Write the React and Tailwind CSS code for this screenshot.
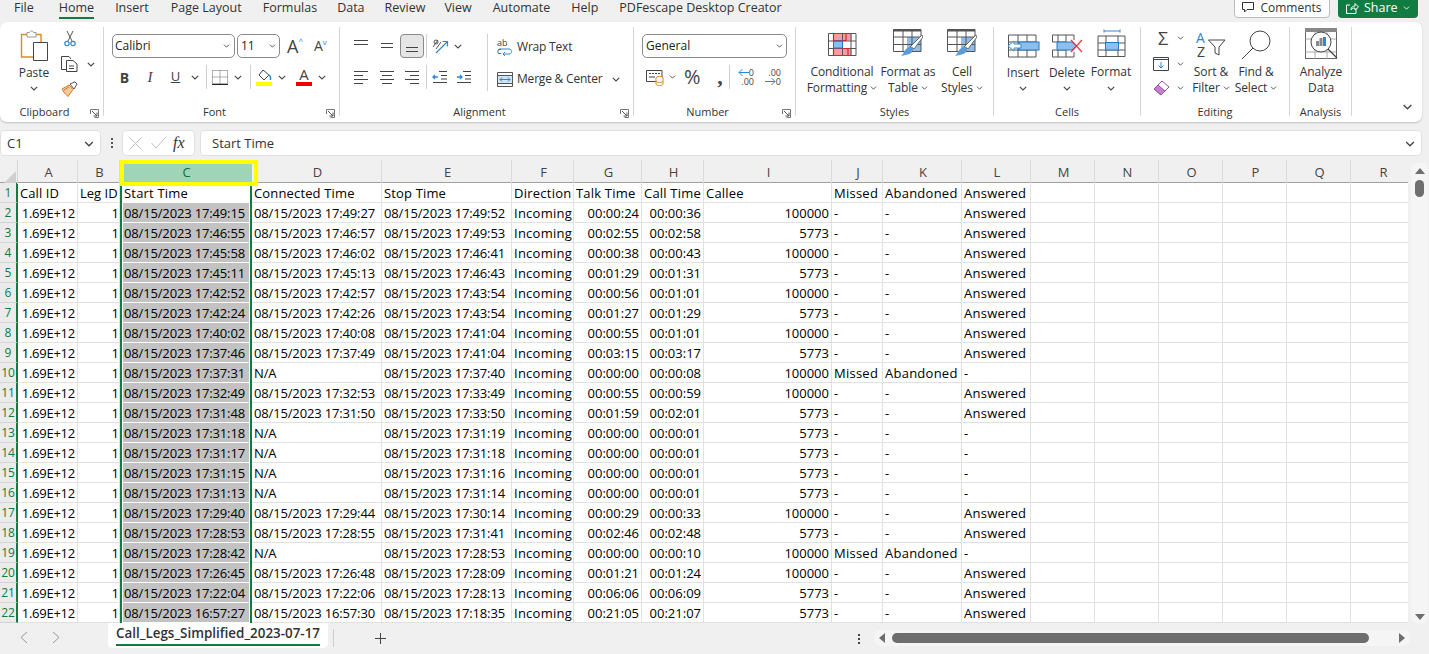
import React from "react";

const Chev = ({ w = 8, h = 5, c = "#444" }) => (
  <svg width={w} height={h} viewBox="0 0 8 5" className="shrink-0">
    <polyline points="0.8,0.8 4,4 7.2,0.8" fill="none" stroke={c} strokeWidth="1.1" />
  </svg>
);

const Launcher = () => (
  <svg width="9" height="9" viewBox="0 0 9 9" className="absolute right-[4px] -bottom-[2px]">
    <path d="M.5 5V.5H8.5V8.5H4.5" fill="none" stroke="#777" />
    <path d="M2 2L7 7M7 3.5V7H3.5" fill="none" stroke="#555" />
  </svg>
);

const Group = ({ label, w, launcher, children }) => (
  <div className={`relative flex h-[89px] shrink-0 flex-col border-r border-[#d5d5d5] ${w}`}>
    <div className="flex-1">{children}</div>
    <div
      className={`-mb-[4px] h-[15px] text-center text-[11px] leading-[14px] text-[#333] ${
        launcher ? "pr-[14px]" : ""
      }`}
    >
      {label}
    </div>
    {launcher && <Launcher />}
  </div>
);

const Slot = ({ w, children }) => (
  <div className={`flex h-6 shrink-0 items-center justify-center ${w}`}>{children}</div>
);

const Sep = () => <div className="mx-[2px] h-6 w-px shrink-0 bg-[#d0d0d0]" />;

const AlignIcon = ({ lines, y = 0 }) => (
  <svg width="16" height="14" viewBox="0 0 16 14" stroke="#444" strokeWidth="1">
    {lines.map((l, i) => (
      <line key={i} x1={l[0]} x2={l[1]} y1={l[2] + y + 0.5} y2={l[2] + y + 0.5} />
    ))}
  </svg>
);

const PasteIcon = () => (
  <svg width="30" height="32" viewBox="0 0 30 32" fill="none">
    <path d="M2.5 4.5H22V27H2.5Z" fill="#fff" stroke="#e08a1e" strokeWidth="1.4" />
    <path d="M8 5V2.5H10.5C11 .5 14 .5 14.5 2.5H17V7H8Z" fill="#fff" stroke="#999" />
    <path d="M14.5 12.5H28.5V30.5H14.5Z" fill="#fff" stroke="#444" />
  </svg>
);

const Scissors = () => (
  <svg width="12" height="17" viewBox="0 0 12 17" fill="none">
    <path d="M3 1L8 11M9 1L4 11" stroke="#555" />
    <circle cx="3" cy="13.5" r="2.2" stroke="#2b88d8" strokeWidth="1.2" />
    <circle cx="9" cy="13.5" r="2.2" stroke="#2b88d8" strokeWidth="1.2" />
  </svg>
);

const CopyIcon = () => (
  <svg width="17" height="16" viewBox="0 0 17 16" fill="none" stroke="#444">
    <path d="M5 13.5H.5V.5H8L10 3" />
    <path d="M5.5 4.5H12L16 8V15.5H5.5Z" fill="#fff" />
    <path d="M8 10H13M8 12.5H13" />
  </svg>
);

const Brush = () => (
  <svg width="17" height="16" viewBox="0 0 17 16" fill="none">
    <path d="M9 3L14 0.8L16 3L13 8L9 3Z" fill="#fff" stroke="#555" />
    <path d="M1 8L8 4L12 8.5L7 15.5L3.5 12L1 8Z" fill="#f3c9a0" stroke="#d87a16" />
    <path d="M3 9L8 6" stroke="#d87a16" />
  </svg>
);

const BorderIcon = () => (
  <svg width="16" height="15" viewBox="0 0 16 15" fill="none" stroke="#666" strokeDasharray="1 1">
    <path d="M.5.5H15.5V13.5H.5ZM8 .5V13.5M.5 7H15.5" />
    <path d="M0 14.5H16" stroke="#222" strokeDasharray="none" />
  </svg>
);

const FillIcon = () => (
  <svg width="16" height="17" viewBox="0 0 16 17" fill="none">
    <path d="M7 1L13 6L8 11L3 6Z" stroke="#444" />
    <path d="M12 6C14 6 15 8 14.5 11" stroke="#2b88d8" strokeWidth="1.5" />
    <rect y="13" width="16" height="4" fill="#ffff00" />
  </svg>
);

const OrientIcon = () => (
  <svg width="18" height="17" viewBox="0 0 18 17" fill="none">
    <path d="M2 9L7 2M5 11L10 4" stroke="#555" />
    <circle cx="5" cy="4" r="2" stroke="#555" />
    <path d="M5 15L16 4M11.5 3.5H16.5V8.5" stroke="#2b88d8" strokeWidth="1.2" />
  </svg>
);

const IndentIcon = ({ flip }) => (
  <svg width="16" height="14" viewBox="0 0 16 14" fill="none">
    <path d="M7 1.5H15M9 5.5H15M9 9H15M1 12.5H15" stroke="#444" />
    {flip ? (
      <path d="M1 7H6M4 5L6 7L4 9" stroke="#2b88d8" strokeWidth="1.3" />
    ) : (
      <path d="M1 7H6M3 5L1 7L3 9" stroke="#2b88d8" strokeWidth="1.3" />
    )}
  </svg>
);

const WrapIcon = () => (
  <svg width="15" height="8" viewBox="0 0 15 8" fill="none" className="absolute bottom-0 right-0">
    <path d="M1 1H11C14.500 1 14.500 6 11 6H5M7 4L5 6L7 8" stroke="#2b88d8" />
  </svg>
);

const MergeIcon = () => (
  <svg width="16" height="15" viewBox="0 0 16 15" fill="none">
    <path d="M.5.5H15.5V14.5H.5Z" stroke="#555" />
    <path d="M.5 3.5H15.5M.5 11.5H15.5" stroke="#555" />
    <rect x="1" y="4" width="14" height="7" fill="#cfe4f7" />
    <path d="M3 7.5H13M5 5.5L3 7.5L5 9.5M11 5.5L13 7.5L11 9.5" stroke="#2b88d8" />
  </svg>
);

const AccountingIcon = () => (
  <svg width="18" height="17" viewBox="0 0 18 17" fill="none">
    <path d="M.5 1.5H16V12.5H.5Z" stroke="#444" />
    <path d="M3 4.5H14" stroke="#444" strokeDasharray="2 1" />
    <path d="M3 8H9" stroke="#444" />
    <ellipse cx="13.5" cy="9" rx="3.5" ry="1.6" fill="#fff" stroke="#e08a1e" />
    <path d="M10 9V15C10 17 17 17 17 15V9" fill="#fff" stroke="#e08a1e" />
    <path d="M10 12C10 14 17 14 17 12" stroke="#e08a1e" />
  </svg>
);

const DecArrow = ({ right }) => (
  <svg width="11" height="9" viewBox="0 0 11 9" fill="none" stroke="#2b88d8" className="shrink-0">
    {right ? <path d="M0 4.500H10M6.500 1L10 4.500L6.500 8" /> : <path d="M11 4.500H1M4.500 1L1 4.500L4.500 8" />}
  </svg>
);

const CondIcon = () => (
  <svg width="29" height="24" viewBox="0 0 29 24" fill="none">
    <rect x="5.5" y=".5" width="18" height="7" fill="#f79ca3" />
    <rect x="5.5" y="15.5" width="18" height="7" fill="#f79ca3" />
    <rect x="5.5" y="8" width="9" height="7" fill="#8cbfee" />
    <path d="M.5.5H28V22.5H.5ZM.5 8H28M.5 15.5H28M5.5.5V22.5M14.5.5V22.5M23 .5V22.5" stroke="#555" />
    <path d="M5.5.5H18V7.5H5.5ZM5.5 15.5H20V22.5H5.5Z" stroke="#d8232a" strokeWidth="1.2" />
    <path d="M5.5 8H14.5V15H5.5Z" stroke="#1e78c8" />
  </svg>
);

const TableIcon = () => (
  <svg width="30" height="28" viewBox="0 0 30 28" fill="none">
    <rect x="14" y="8" width="14" height="14" fill="#8cbfee" />
    <path d="M.5.5H28V22.5H.5ZM.5 8H28M.5 15.5H28M10 .5V22.5M19 .5V22.5" stroke="#555" />
    <path d="M.5 1.5H28" stroke="#555" strokeWidth="2" />
    <path d="M29 6L17 18C19 18 20 19 21 20L30 8Z" fill="#fff" stroke="#666" />
    <path d="M16 18C19 18 21 20 19 23C17 26 11 26 8 27C11 25 11 20 16 18Z" fill="#5a9bdc" />
  </svg>
);

const InsertIcon = () => (
  <svg width="33" height="24" viewBox="0 0 33 24" fill="none">
    <path d="M1.5 1H29V23H1.5ZM11 1V23M20 1V23" stroke="#555" />
    <path d="M1.5 8H29M1.5 16H29" stroke="#555" />
    <rect x="12" y="8" width="20" height="8" fill="#8cbfee" stroke="#1e78c8" />
    <path d="M14 10V14H7V17L1 12L7 7V10Z" fill="#fff" stroke="#2b88d8" />
  </svg>
);

const DeleteIcon = () => (
  <svg width="31" height="24" viewBox="0 0 31 24" fill="none">
    <path d="M.5 1H22M.5 23H22M.5 1V8M.5 16V23M6 1V23M14 1V23M22 1V6M22 18V23" stroke="#555" />
    <path d="M.5 8H14M.5 16H14" stroke="#555" />
    <path d="M5 8H20L24 12L20 16H5Z" fill="#8cbfee" stroke="#1e78c8" />
    <path d="M19 6L30 18M30 6L19 18" stroke="#e8383d" strokeWidth="1.2" />
  </svg>
);

const FormatIcon = () => (
  <svg width="29" height="29" viewBox="0 0 29 29" fill="none">
    <path d="M7 2H23M7 .5V3.5M23 .5V3.5" stroke="#2b88d8" />
    <path d="M1 7H28V27.5H1ZM1 14H28M1 21H28M9 7V27.5M21 7V27.5" stroke="#555" />
    <rect x="8.5" y="13.5" width="13" height="7.5" fill="#8cbfee" stroke="#1e78c8" />
  </svg>
);

const SortIcon = () => (
  <div className="relative h-[28px] w-[30px]">
    <span className="absolute -top-[3px] left-0 text-[14px] leading-[18px] text-[#2b88d8]">A</span>
    <span className="absolute top-[11px] left-px text-[14px] leading-[18px] text-[#444]">Z</span>
    <svg width="30" height="28" viewBox="0 0 30 28" fill="none" className="absolute left-0 top-0">
      <path d="M12.5 8H29L23 15V23L19 21V15Z" fill="#fff" stroke="#444" />
    </svg>
  </div>
);

const FindIcon = () => (
  <svg width="30" height="30" viewBox="0 0 30 30" fill="none" stroke="#444">
    <circle cx="19" cy="11" r="10" fill="#fff" />
    <path d="M12 18L1 29" />
  </svg>
);

const AnalyzeIcon = () => (
  <svg width="33" height="32" viewBox="0 0 33 32" fill="none">
    <rect x=".5" y=".5" width="31" height="30" fill="#fff" stroke="#666" />
    <rect x="0" y="0" width="32" height="4" fill="#888" />
    <path d="M.5 11H31M.5 24H31M10 4V31M22 4V31" stroke="#aaa" />
    <circle cx="16" cy="14" r="10" fill="#fff" stroke="#444" />
    <rect x="11" y="13" width="3" height="5" fill="#888" />
    <rect x="14.5" y="10" width="3" height="8" fill="#888" />
    <rect x="18" y="9" width="3" height="9" fill="#2b88d8" />
    <path d="M23 21L32 30" stroke="#444" strokeWidth="1.3" />
  </svg>
);

const BigBtn = ({ w, icon, top = "h-[37px]", gap = "mt-[4px]", lines, chev }) => (
  <div className={`flex shrink-0 flex-col items-center ${w}`}>
    <div className={`flex items-end justify-center ${top}`}>{icon}</div>
    <div className={`flex flex-col items-center text-[12px] leading-[16px] tracking-[-0.1px] text-[#333] ${gap}`}>
      {lines.map((l, i) => (
        <div key={i} className="flex items-center gap-[3px] whitespace-nowrap">
          {l}
          {chev && i === lines.length - 1 && <Chev w={7} h={4} />}
        </div>
      ))}
    </div>
  </div>
);

const TABS = [
  ["File", "ml-[14px]"],
  ["Home", "ml-[25px]"],
  ["Insert", "ml-[21px]"],
  ["Page Layout", "ml-[22px]"],
  ["Formulas", "ml-[21px]"],
  ["Data", "ml-[20px]"],
  ["Review", "ml-[20px]"],
  ["View", "ml-[19px]"],
  ["Automate", "ml-[21px]"],
  ["Help", "ml-[21px]"],
  ["PDFescape Desktop Creator", "ml-[21px]"],
];

const COLS = ["A", "B", "C", "D", "E", "F", "G", "H", "I", "J", "K", "L", "M", "N", "O", "P", "Q", "R"];

const D = "08/15/2023 ";
const RAW = [
  ["17:49:15", "17:49:27", "17:49:52", "00:00:24", "00:00:36", "100000"],
  ["17:46:55", "17:46:57", "17:49:53", "00:02:55", "00:02:58", "5773"],
  ["17:45:58", "17:46:02", "17:46:41", "00:00:38", "00:00:43", "100000"],
  ["17:45:11", "17:45:13", "17:46:43", "00:01:29", "00:01:31", "5773"],
  ["17:42:52", "17:42:57", "17:43:54", "00:00:56", "00:01:01", "100000"],
  ["17:42:24", "17:42:26", "17:43:54", "00:01:27", "00:01:29", "5773"],
  ["17:40:02", "17:40:08", "17:41:04", "00:00:55", "00:01:01", "100000"],
  ["17:37:46", "17:37:49", "17:41:04", "00:03:15", "00:03:17", "5773"],
  ["17:37:31", null, "17:37:40", "00:00:00", "00:00:08", "100000", "M"],
  ["17:32:49", "17:32:53", "17:33:49", "00:00:55", "00:00:59", "100000"],
  ["17:31:48", "17:31:50", "17:33:50", "00:01:59", "00:02:01", "5773"],
  ["17:31:18", null, "17:31:19", "00:00:00", "00:00:01", "5773", "N"],
  ["17:31:17", null, "17:31:18", "00:00:00", "00:00:01", "5773", "N"],
  ["17:31:15", null, "17:31:16", "00:00:00", "00:00:01", "5773", "N"],
  ["17:31:13", null, "17:31:14", "00:00:00", "00:00:01", "5773", "N"],
  ["17:29:40", "17:29:44", "17:30:14", "00:00:29", "00:00:33", "100000"],
  ["17:28:53", "17:28:55", "17:31:41", "00:02:46", "00:02:48", "5773"],
  ["17:28:42", null, "17:28:53", "00:00:00", "00:00:10", "100000", "M"],
  ["17:26:45", "17:26:48", "17:28:09", "00:01:21", "00:01:24", "100000"],
  ["17:22:04", "17:22:06", "17:28:13", "00:06:06", "00:06:09", "5773"],
  ["16:57:27", "16:57:30", "17:18:35", "00:21:05", "00:21:07", "5773"],
];

const Cell = ({ cls = "", children }) => (
  <div
    className={`h-5 overflow-hidden whitespace-nowrap border-b border-r border-[#e1e1e1] bg-white px-[2px] leading-[21px] ${cls}`}
  >
    {children}
  </div>
);

const RowHead = ({ n }) => (
  <div className="h-5 border-b border-[#d4d4d4] border-r-2 border-r-[#107c41] bg-[#ebebeb] text-center text-[12px] leading-[20px] text-[#107c41]">
    {n}
  </div>
);

const SelCell = ({ children, head }) => (
  <div className="h-5 border-x-2 border-[#107c41] bg-white">
    <div
      className={`mx-px h-[19px] overflow-hidden whitespace-nowrap px-px leading-[21px] ${
        head ? "bg-white tracking-[0.2px]" : "bg-[#c2c2c2] tracking-[-0.15px]"
      }`}
    >
      {children}
    </div>
  </div>
);

const Row = ({ n, cells }) => {
  const head = n === 1;
  const words = "tracking-[0.25px]";
  const stamp = head ? "tracking-[0.15px]" : "tracking-[-0.15px]";
  const right = head ? "tracking-[0.2px]" : "text-right";
  return (
    <>
      <RowHead n={n} />
      <Cell cls={head ? "tracking-[0.1px]" : "text-right tracking-[-0.25px]"}>{cells[0]}</Cell>
      <Cell cls={head ? "" : "text-right pr-0"}>{cells[1]}</Cell>
      <SelCell head={head}>{cells[2]}</SelCell>
      <Cell cls={stamp}>{cells[3]}</Cell>
      <Cell cls={stamp}>{cells[4]}</Cell>
      <Cell cls={words}>{cells[5]}</Cell>
      <Cell cls={right}>{cells[6]}</Cell>
      <Cell cls={right}>{cells[7]}</Cell>
      <Cell cls={right}>{cells[8]}</Cell>
      <Cell cls={words}>{cells[9]}</Cell>
      <Cell cls={words}>{cells[10]}</Cell>
      <Cell cls={words}>{cells[11]}</Cell>
      <Cell />
      <Cell />
      <Cell />
      <Cell />
      <Cell />
      <Cell />
    </>
  );
};

const rows = RAW.map((r) => {
  const kind = r[6];
  return [
    "1.69E+12",
    "1",
    D + r[0],
    r[1] ? D + r[1] : "N/A",
    D + r[2],
    "Incoming",
    r[3],
    r[4],
    r[5],
    kind === "M" ? "Missed" : "-",
    kind === "M" ? "Abandoned" : "-",
    kind ? "-" : "Answered",
  ];
});

export default function App() {
  return (
    <div className="relative h-[654px] w-[1429px] overflow-hidden bg-[#f0f0f0] font-['Open_Sans',sans-serif] text-black">
      {/* menu tabs */}
      <div className="relative flex h-[22px] items-start text-[12.5px] leading-[15px] text-[#333]">
        {TABS.map(([t, m]) => (
          <div key={t} className={`whitespace-nowrap ${m} relative`}>
            {t}
            {t === "Home" && <div className="mt-[2px] h-[2px] bg-[#107c41]" />}
          </div>
        ))}
        <div className="ml-auto mr-[11px] flex gap-2">
          <div className="-mt-[3px] flex h-[21px] w-[96px] items-center justify-center gap-[6px] rounded-b-[4px] border border-[#bbb] bg-white text-[12px]">
            <svg width="12" height="11" viewBox="0 0 12 11" fill="none" stroke="#333">
              <path d="M.5.5H11.5V7.5H5L2.5 10V7.5H.5Z" />
            </svg>
            Comments
          </div>
          <div className="-mt-[3px] flex h-[21px] w-[80px] items-center gap-[5px] rounded-b-[4px] bg-[#107c41] pl-[8px] text-[12.500px] text-white">
            <svg width="13" height="12" viewBox="0 0 13 12" fill="none" stroke="#fff">
              <path d="M4 3H.5V11.5H10V7M5 8C5 5 7 4 9 4V1.5L12.5 5L9 8V6C7 6 6 6.500 5 8Z" />
            </svg>
            Share
            <div className="ml-auto mr-[8px]">
              <Chev w={7} h={4} c="#fff" />
            </div>
          </div>
        </div>
      </div>

      {/* ribbon */}
      <div className="relative flex h-[100px] w-[1422px] rounded-[7px] bg-white py-[5px] shadow-[0_1px_2px_rgba(0,0,0,0.2)]">
        <Group label="Clipboard" w="w-[104px]" launcher>
          <div className="flex">
            <div className="ml-[19px] flex w-[30px] flex-col items-center">
              <div className="mt-[3px]">
                <PasteIcon />
              </div>
              <div className="mt-[3px] text-[12px] leading-[16px] text-[#333]">Paste</div>
              <div className="mt-[5px]">
                <Chev />
              </div>
            </div>
            <div className="ml-[12px] flex flex-col">
              <div className="ml-[3px] mt-[3px]">
                <Scissors />
              </div>
              <div className="mt-[9px] flex items-center">
                <CopyIcon />
                <div className="ml-[9px]">
                  <Chev />
                </div>
              </div>
              <div className="mt-[9px]">
                <Brush />
              </div>
            </div>
          </div>
        </Group>

        <Group label="Font" w="w-[236px]" launcher>
          <div className="ml-[8px] mt-[7px] flex h-6 items-center">
            <div className="flex h-6 w-[123px] items-center justify-between rounded-[5px] border border-[#8a8a8a] pl-[2px] pr-[4px] text-[12px] text-[#222]">
              Calibri
              <Chev w={7} h={4} />
            </div>
            <div className="ml-[2px] flex h-6 w-[43px] items-center justify-between rounded-[5px] border border-[#8a8a8a] pl-[3px] pr-[3px] text-[12px] text-[#222]">
              11
              <Chev w={7} h={4} />
            </div>
            <div className="ml-[7px] flex w-[17px] items-start text-[18px] leading-[20px] text-[#444]">
              A<span className="text-[8px] leading-[10px] text-[#2b88d8]">^</span>
            </div>
            <div className="ml-[10px] flex w-[16px] items-start text-[14px] leading-[18px] text-[#444]">
              A<span className="text-[8px] leading-[10px] text-[#2b88d8]">v</span>
            </div>
          </div>
          <div className="ml-[8px] mt-[7px] flex items-center">
            <Slot w="w-[25px]">
              <span className="text-[14px] font-bold text-[#444]">B</span>
            </Slot>
            <Slot w="w-[26px]">
              <span className="font-['Liberation_Serif',serif] text-[15px] italic text-[#444]">I</span>
            </Slot>
            <Slot w="w-[25px]">
              <span className="text-[13px] underline text-[#444]">U</span>
            </Slot>
            <Slot w="w-[13px]">
              <Chev />
            </Slot>
            <div className="ml-[3px]">
              <Sep />
            </div>
            <Slot w="w-[21px]">
              <BorderIcon />
            </Slot>
            <Slot w="w-[16px]">
              <Chev />
            </Slot>
            <div className="ml-[2px]">
              <Sep />
            </div>
            <Slot w="w-[21px]">
              <FillIcon />
            </Slot>
            <Slot w="w-[16px]">
              <Chev />
            </Slot>
            <div className="ml-[6px] flex w-[16px] flex-col items-center">
              <span className="text-[15px] leading-[13px] text-[#444]">A</span>
              <div className="mt-[1px] h-[4px] w-[16px] bg-[#ee0000]" />
            </div>
            <Slot w="w-[19px]">
              <Chev />
            </Slot>
          </div>
        </Group>

        <Group label="Alignment" w="w-[294px]" launcher>
          <div className="flex">
            <div className="ml-[8px] w-[139px]">
              <div className="mt-[7px] flex items-center">
                <Slot w="w-[26px]">
                  <AlignIcon lines={[[1, 15, 1], [1, 15, 5]]} />
                </Slot>
                <Slot w="w-[26px]">
                  <AlignIcon lines={[[2, 14, 4], [2, 14, 8]]} />
                </Slot>
                <div className="flex h-6 w-[24px] items-center justify-center rounded-[4px] border border-[#8a8a8a] bg-[#e6e6e6]">
                  <AlignIcon lines={[[2, 14, 8], [2, 14, 12]]} />
                </div>
                <Sep />
                <Slot w="w-[22px]">
                  <OrientIcon />
                </Slot>
                <Slot w="w-[14px]">
                  <Chev />
                </Slot>
              </div>
              <div className="mt-[7px] flex items-center">
                <Slot w="w-[26px]">
                  <AlignIcon lines={[[1, 15, 1], [1, 10, 5], [1, 15, 9], [1, 10, 13]]} />
                </Slot>
                <Slot w="w-[26px]">
                  <AlignIcon lines={[[1, 15, 1], [3, 13, 5], [1, 15, 9], [3, 13, 13]]} />
                </Slot>
                <Slot w="w-[24px]">
                  <AlignIcon lines={[[1, 15, 1], [6, 15, 5], [1, 15, 9], [6, 15, 13]]} />
                </Slot>
                <Sep />
                <Slot w="w-[22px]">
                  <IndentIcon />
                </Slot>
                <Slot w="w-[26px]">
                  <IndentIcon flip />
                </Slot>
              </div>
            </div>
            <div className="mt-[7px] h-[57px] w-px bg-[#d0d0d0]" />
            <div className="ml-[9px] text-[12px] tracking-[-0.2px] text-[#333]">
              <div className="mt-[10px] flex h-5 items-center">
                <div className="relative mr-[3px] h-[17px] w-[16px] shrink-0 text-[9px] leading-[8px] tracking-normal text-[#444]">
                  ab
                  <br />c
                  <WrapIcon />
                </div>
                <span className="ml-[1px]">Wrap Text</span>
              </div>
              <div className="mt-[12px] flex h-5 items-center">
                <MergeIcon />
                <span className="ml-[4px]">Merge &amp; Center</span>
                <div className="ml-[10px]">
                  <Chev />
                </div>
              </div>
            </div>
          </div>
        </Group>

        <Group label="Number" w="w-[162px]" launcher>
          <div className="ml-[8px] mt-[7px] flex h-6 w-[145px] items-center justify-between rounded-[5px] border border-[#8a8a8a] px-[3px] text-[12px] text-[#222]">
            General
            <Chev w={7} h={4} />
          </div>
          <div className="ml-[12px] mt-[7px] flex items-center">
            <AccountingIcon />
            <div className="ml-[5px]">
              <Chev w={7} h={4} />
            </div>
            <span className="ml-[8px] w-[23px] text-[20px] leading-6 text-[#444]">%</span>
            <span className="ml-[6px] w-[14px] text-center font-['Liberation_Serif',serif] text-[22px] font-bold leading-6 text-[#444]">,</span>
            <Sep />
            <div className="ml-[3px] flex w-[19px] flex-col items-end text-[9px] leading-[9px] text-[#444]">
              <span className="flex items-center">
                <DecArrow />0
              </span>
              <span>.00</span>
            </div>
            <div className="ml-[8px] flex w-[19px] flex-col items-end text-[9px] leading-[9px] text-[#444]">
              <span>.00</span>
              <span className="flex items-center">
                <DecArrow right />0
              </span>
            </div>
          </div>
        </Group>

        <Group label="Styles" w="w-[198px]">
          <div className="flex">
            <div className="ml-[10px]">
              <BigBtn w="w-[72px]" top="h-[30px]" gap="mt-[7px]" icon={<CondIcon />} lines={["Conditional", "Formatting"]} chev />
            </div>
            <BigBtn w="w-[60px]" top="h-[30px]" gap="mt-[7px]" icon={<TableIcon />} lines={["Format as", "Table"]} chev />
            <BigBtn w="w-[48px]" top="h-[30px]" gap="mt-[7px]" icon={<TableIcon />} lines={["Cell", "Styles"]} chev />
          </div>
        </Group>

        <Group label="Cells" w="w-[147px]">
          <div className="ml-[7px] flex">
            <div className="flex w-[44px] flex-col items-center">
              <div className="mt-[7px]">
                <InsertIcon />
              </div>
              <div className="mt-[7px] text-[12px] leading-[16px] text-[#333]">Insert</div>
              <div className="mt-[5px]">
                <Chev />
              </div>
            </div>
            <div className="flex w-[44px] flex-col items-center">
              <div className="mt-[7px]">
                <DeleteIcon />
              </div>
              <div className="mt-[7px] text-[12px] leading-[16px] text-[#333]">Delete</div>
              <div className="mt-[5px]">
                <Chev />
              </div>
            </div>
            <div className="flex w-[44px] flex-col items-center">
              <div className="mt-[2px]">
                <FormatIcon />
              </div>
              <div className="mt-[6px] text-[12px] leading-[16px] text-[#333]">Format</div>
              <div className="mt-[6px]">
                <Chev />
              </div>
            </div>
          </div>
        </Group>

        <Group label="Editing" w="w-[149px]">
          <div className="flex">
            <div className="ml-[12px] flex w-[36px] flex-col">
              <div className="mt-[3px] flex h-[16px] items-center">
                <span className="w-[20px] text-center text-[18px] leading-[16px] text-[#444]">Σ</span>
                <div className="ml-[4px]">
                  <Chev w={7} h={4} />
                </div>
              </div>
              <div className="mt-[11px] flex items-center">
                <svg width="16" height="14" viewBox="0 0 16 14" fill="none">
                  <path d="M.5.5H15.500V13.500H.5Z" stroke="#444" />
                  <path d="M.5 2.500H15.500" stroke="#444" />
                  <path d="M8 5V11M5.500 8.500L8 11L10.500 8.500" stroke="#2b88d8" />
                </svg>
                <div className="ml-[8px]">
                  <Chev w={7} h={4} />
                </div>
              </div>
              <div className="mt-[9px] flex items-center">
                <svg width="17" height="16" viewBox="0 0 17 16" fill="none">
                  <path d="M1 9L9 1L16 7L8 15Z" fill="#fff" stroke="#9b4fa8" />
                  <path d="M1 9L5 5L12 11L8 15Z" fill="#c47fd0" stroke="#9b4fa8" />
                </svg>
                <div className="ml-[7px]">
                  <Chev w={7} h={4} />
                </div>
              </div>
            </div>
            <BigBtn w="w-[44px]" top="h-[33px]" icon={<SortIcon />} lines={["Sort &", "Filter"]} chev />
            <BigBtn w="w-[46px]" top="h-[33px]" icon={<FindIcon />} lines={["Find &", "Select"]} chev />
          </div>
        </Group>

        <Group label="Analysis" w="w-[62px]">
          <BigBtn w="w-[62px]" top="h-[33px]" icon={<AnalyzeIcon />} lines={["Analyze", "Data"]} />
        </Group>

        <div className="ml-auto mr-[9px] mt-[77px]">
          <Chev w={11} h={6} />
        </div>
      </div>

      {/* formula bar */}
      <div className="mt-[8px] flex h-[26px] items-stretch text-[13px] text-[#333]">
        <div className="flex w-[101px] items-center justify-between rounded-[4px] border border-[#e0e0e0] bg-white pl-[6px] pr-[6px] pt-px">
          C1
          <Chev w={10} h={6} />
        </div>
        <div className="flex w-[21px] flex-col items-center justify-center gap-[2px]">
          <div className="size-[2px] bg-[#555]" />
          <div className="size-[2px] bg-[#555]" />
          <div className="size-[2px] bg-[#555]" />
        </div>
        <div className="flex w-[73px] items-center rounded-[4px] border border-[#e0e0e0] bg-white pl-[6px]">
          <svg width="13" height="13" viewBox="0 0 13 13" stroke="#bdbdbd" fill="none">
            <path d="M.5.5L12.500 12.500M12.500.5L.5 12.500" />
          </svg>
          <svg width="15" height="12" viewBox="0 0 15 12" stroke="#bdbdbd" fill="none" className="ml-[9px]">
            <path d="M.5 6L5 11L14.500 .5" />
          </svg>
          <span className="ml-[7px] font-['Liberation_Serif',serif] text-[16px] italic leading-none text-[#333]">fx</span>
        </div>
        <div className="ml-[5px] flex w-[1222px] items-center justify-between rounded-[4px] border border-[#e0e0e0] bg-white pl-[11px] pr-[6px] pt-px">
          Start Time
          <Chev w={10} h={6} />
        </div>
      </div>

      {/* sheet */}
      <div className="mt-[4px] flex">
        <div className="w-[1408px] overflow-hidden text-[13px]">
          <div className="grid h-[23px] w-[1416px] grid-cols-[18px_60px_42px_132px_130px_130px_62px_68px_62px_128px_51px_79px_69px_64px_64px_64px_64px_64px_64px] border-b border-[#a0a0a0] text-center text-[13px] leading-[24px] text-[#444]">
            <div className="relative border-r border-[#d5d5d5]">
              <div className="absolute bottom-[1px] right-[1px] size-0 border-b-[12px] border-l-[12px] border-b-[#d0d0d0] border-l-transparent" />
            </div>
            {COLS.map((c) => (
              <div
                key={c}
                className={
                  c === "C"
                    ? "bg-[#9fd5b7] pl-px text-[#0e6b3b]"
                    : "border-r border-[#dadada] pl-[2px]"
                }
              >
                {c}
              </div>
            ))}
          </div>
          <div className="grid w-[1416px] grid-cols-[18px_60px_42px_132px_130px_130px_62px_68px_62px_128px_51px_79px_69px_64px_64px_64px_64px_64px_64px]">
            <Row
              n={1}
              cells={[
                "Call ID",
                "Leg ID",
                "Start Time",
                "Connected Time",
                "Stop Time",
                "Direction",
                "Talk Time",
                "Call Time",
                "Callee",
                "Missed",
                "Abandoned",
                "Answered",
              ]}
            />
            {rows.map((cells, i) => (
              <Row key={i} n={i + 2} cells={cells} />
            ))}
          </div>
        </div>
        {/* vertical scrollbar */}
        <div className="ml-[3px] mt-[3px] flex h-[460px] w-[17px] flex-col items-center rounded-[6px] bg-[#f5f5f5] pt-[5px]">
          <div className="size-0 border-x-[5px] border-b-[6px] border-x-transparent border-b-[#6e6e6e]" />
          <div className="mt-[6px] h-[17px] w-[9px] rounded-[5px] bg-[#6e6e6e]" />
          <div className="mb-[3px] mt-auto size-0 border-x-[5px] border-t-[6px] border-x-transparent border-t-[#6e6e6e]" />
        </div>
      </div>

      {/* sheet tabs */}
      <div className="flex h-[31px] items-start">
        <svg width="8" height="13" viewBox="0 0 8 13" fill="none" stroke="#999" className="ml-[20px] mt-[8px]">
          <path d="M7 1L1 6.500L7 12" />
        </svg>
        <svg width="8" height="13" viewBox="0 0 8 13" fill="none" stroke="#999" className="ml-[24px] mt-[8px]">
          <path d="M1 1L7 6.500L1 12" />
        </svg>
        <div className="ml-[48px] flex h-[25px] w-[220px] flex-col items-center rounded-b-[5px] bg-white text-[13.400px] font-semibold leading-[21px] text-[#333]">
          Call_Legs_Simplified_2023-07-17
          <div className="h-[2px] w-[204px] bg-[#107c41]" />
        </div>
        <div className="ml-[5px] mt-[6px] h-[18px] w-px bg-[#cfcfcf]" />
        <svg width="11" height="11" viewBox="0 0 11 11" stroke="#444" className="ml-[41px] mt-[10px]">
          <path d="M5.500 0V11M0 5.500H11" />
        </svg>
        <div className="ml-[472px] mt-[11px] flex flex-col gap-[2px]">
          <div className="size-[2px] bg-[#444]" />
          <div className="size-[2px] bg-[#444]" />
          <div className="size-[2px] bg-[#444]" />
        </div>
        <div className="ml-[14px] mt-[7px] flex h-[16px] w-[536px] items-center rounded-[7px] bg-[#f5f5f5] pl-[5px]">
          <div className="size-0 border-y-[5px] border-r-[6px] border-y-transparent border-r-[#6e6e6e]" />
          <div className="ml-[7px] h-[10px] w-[477px] rounded-[5px] bg-[#6e6e6e]" />
          <div className="ml-auto mr-[5px] size-0 border-y-[5px] border-l-[6px] border-y-transparent border-l-[#6e6e6e]" />
        </div>
      </div>

      {/* yellow highlight drawn on the screenshot */}
      <div className="pointer-events-none absolute left-[120px] top-[160px] h-[26px] w-[138px] border-[4px] border-[#ffff00]" />
    </div>
  );
}
